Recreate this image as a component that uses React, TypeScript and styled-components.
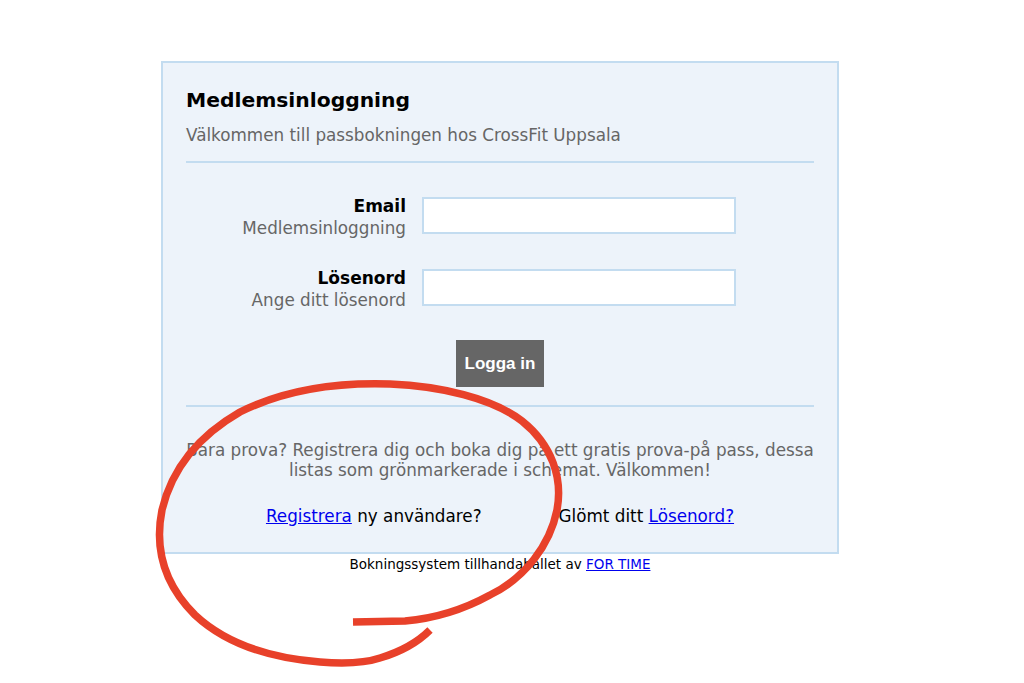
import styled, { createGlobalStyle } from "styled-components";

const GlobalStyle = createGlobalStyle`
    html, body {
        margin: 0;
        padding: 0;
        background: #ffffff;
        font-family: "DejaVu Sans", "Noto Sans", sans-serif;
    }
`

const Page = styled.div`
    position: relative;
    width: 1024px;
    height: 683px;
    overflow: hidden;
    padding-top: 61px;
    box-sizing: border-box;
`

const Wrapper = styled.div`
    width: 678px;
    margin-left: 161px;
`

const Card = styled.div`
    background: #edf3fa;
    border: 2px solid #c3dcf0;
    padding: 0 23px 26px;
`

const Title = styled.h1`
    margin: 0;
    padding-top: 24px;
    font-size: 20.3px;
    line-height: 26px;
    font-weight: bold;
    color: #000;
`

const Subtitle = styled.p`
    margin: 12px 0 0;
    font-size: 16.8px;
    line-height: 21px;
    color: #666;
`

const Divider = styled.hr<{ $top: number }>`
    border: none;
    border-top: 2px solid #c3dcf0;
    margin: ${p => p.$top}px 0 0;
`

const Form = styled.form`
    display: flex;
    flex-direction: column;
    gap: 30px;
    margin-top: 34px;
`

const Row = styled.div`
    display: grid;
    grid-template-columns: 220px 314px;
    column-gap: 16px;
    align-items: start;
`

const LabelBox = styled.label`
    display: flex;
    flex-direction: column;
    align-items: flex-end;
    text-align: right;
    margin-top: -2px;
`

const LabelMain = styled.span`
    font-size: 17px;
    line-height: 22px;
    font-weight: bold;
    color: #000;
`

const LabelHint = styled.span`
    font-size: 16.8px;
    line-height: 22px;
    color: #666;
`

const Input = styled.input`
    box-sizing: border-box;
    width: 314px;
    height: 37px;
    background: #fff;
    border: 2px solid #c3dcf0;
    margin: 0;
`

const ButtonRow = styled.div`
    display: flex;
    justify-content: center;
    margin-top: 29px;
`

const Button = styled.button`
    width: 88px;
    height: 47px;
    background: #666;
    color: #fff;
    border: none;
    font-family: "Liberation Sans", Arial, sans-serif;
    font-weight: bold;
    font-size: 17px;
    padding: 0;
`

const Info = styled.p`
    margin: 33px 0 0;
    text-align: center;
    font-size: 16.8px;
    line-height: 20px;
    color: #666;
`

const Links = styled.div`
    display: flex;
    justify-content: center;
    gap: 77px;
    margin-top: 26px;
    font-size: 16.8px;
    line-height: 20px;
    color: #000;
`

const Link = styled.a`
    color: #0000ee;
    text-decoration: underline;
`

const Footer = styled.div`
    text-align: center;
    font-size: 13.5px;
    line-height: 16px;
    margin-top: 2px;
    color: #000;
`

const Scribble = styled.svg`
    position: absolute;
    left: 0;
    top: 0;
    pointer-events: none;
`

export default function App() {
    return (
        <Page>
            <GlobalStyle />
            <Wrapper>
                <Card>
                    <Title>Medlemsinloggning</Title>
                    <Subtitle>Välkommen till passbokningen hos CrossFit Uppsala</Subtitle>
                    <Divider $top={15} />
                    <Form onSubmit={e => e.preventDefault()}>
                        <Row>
                            <LabelBox>
                                <LabelMain>Email</LabelMain>
                                <LabelHint>Medlemsinloggning</LabelHint>
                            </LabelBox>
                            <Input type="text" />
                        </Row>
                        <Row>
                            <LabelBox>
                                <LabelMain>Lösenord</LabelMain>
                                <LabelHint>Ange ditt lösenord</LabelHint>
                            </LabelBox>
                            <Input type="password" />
                        </Row>
                    </Form>
                    <ButtonRow>
                        <Button>Logga in</Button>
                    </ButtonRow>
                    <Divider $top={18} />
                    <Info>
                        Bara prova? Registrera dig och boka dig på ett gratis prova-på pass, dessa listas som grönmarkerade i schemat. Välkommen!
                    </Info>
                    <Links>
                        <span><Link href="#">Registrera</Link> ny användare?</span>
                        <span>Glömt ditt <Link href="#">Lösenord?</Link></span>
                    </Links>
                </Card>
                <Footer>
                    Bokningssystem tillhandahållet av <Link href="#">FOR TIME</Link>
                </Footer>
            </Wrapper>
            <Scribble width="1024" height="683" viewBox="0 0 1024 683">
                <path
                    d="M353 622 L405 621 C440 618 470 606 490 595 C525 578 550 545 557 510 C563 478 552 445 522 421 C492 398 440 386 390 384 C330 382 280 392 240 412 C200 435 172 468 162 510 C154 550 165 585 195 615 C225 643 270 658 320 662 C345 664 365 663 380 658 C400 652 418 642 430 630"
                    fill="none"
                    stroke="#e8412a"
                    strokeWidth="7.5"
                    strokeLinecap="butt"
                    strokeLinejoin="round"
                />
            </Scribble>
        </Page>
    );
}
